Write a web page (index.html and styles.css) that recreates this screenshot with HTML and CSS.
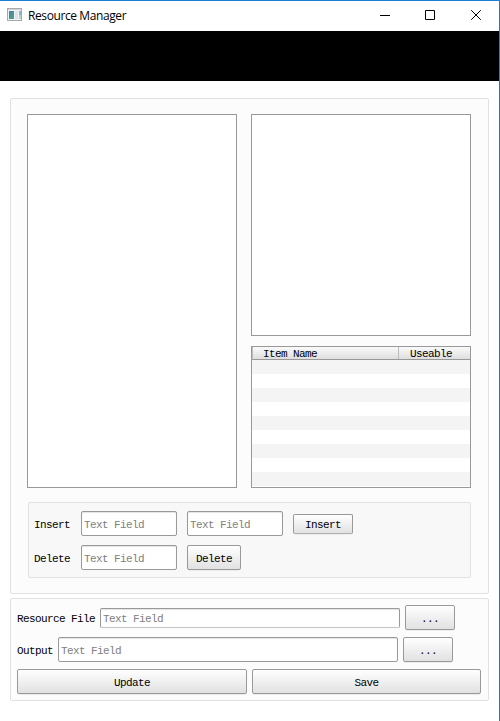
FILE: index.html
```html
<!DOCTYPE html>
<html lang="en">
<head>
<meta charset="utf-8">
<title>Resource Manager</title>
<link rel="stylesheet" href="styles.css">
</head>
<body>
<div class="window">
  <header class="titlebar">
    <svg class="app-icon" width="15" height="13" viewBox="0 0 15 13" shape-rendering="crispEdges">
      <defs>
        <linearGradient id="pane" x1="0" y1="0" x2="1" y2="1">
          <stop offset="0" stop-color="#4a7fae"/><stop offset="1" stop-color="#4fa67c"/>
        </linearGradient>
      </defs>
      <rect x=".5" y=".5" width="14" height="12" fill="#f0f1f3" stroke="#a4a9ae"/>
      <rect x="1" y="1" width="13" height="1" fill="#d3d7dc"/>
      <rect x="2" y="3" width="5" height="8" fill="url(#pane)"/>
      <rect x="8" y="3" width="3" height="8" fill="#dfe2e6"/>
      <rect x="12" y="3" width="2" height="4" fill="#8fb0cf"/>
      <rect x="12" y="7" width="2" height="4" fill="#b5d5c0"/>
    </svg>
    <h1 class="title">Resource Manager</h1>
    <svg class="controls" width="102" height="11" viewBox="0 0 102 11" fill="none" stroke="#000">
      <path d="M0 5.5h10"/>
      <path d="M45.5.5h9v9h-9z"/>
      <path d="M91.2.2l9.6 9.6M100.8.2l-9.6 9.6"/>
    </svg>
  </header>
  <div class="banner"></div>
  <main class="content">
    <section class="panel browser">
      <div class="lists">
        <div class="box tree"></div>
        <div class="side">
          <div class="box preview"></div>
          <div class="box table">
            <div class="thead"><span class="col-name">Item Name</span><span class="col-use">Useable</span></div>
            <div class="rows"></div>
          </div>
        </div>
      </div>
      <div class="group">
        <div class="row">
          <label class="label">Insert</label>
          <div class="field small">Text Field</div>
          <div class="field small">Text Field</div>
          <button class="btn insert">Insert</button>
        </div>
        <div class="row">
          <label class="label">Delete</label>
          <div class="field small">Text Field</div>
          <button class="btn delete">Delete</button>
        </div>
      </div>
    </section>
    <section class="panel files">
      <div class="file-row">
        <label>Resource File</label>
        <div class="field resource">Text Field</div>
        <button class="btn browse">...</button>
      </div>
      <div class="file-row output-row">
        <label>Output</label>
        <div class="field output">Text Field</div>
        <button class="btn browse">...</button>
      </div>
      <div class="file-row actions">
        <button class="btn update">Update</button>
        <button class="btn save">Save</button>
      </div>
    </section>
  </main>
</div>
</body>
</html>
```
FILE: styles.css
```css
* { box-sizing: border-box; }
body {
  margin: 0;
  background: #fff;
  color: #000;
  font: 11px/12px "Liberation Mono", monospace;
  letter-spacing: -0.6px;
}
.window {
  width: 500px;
  height: 721px;
  border-top: 1px solid #1a7fd4;
  border-right: 1px solid #1a7fd4;
  overflow: hidden;
}
.titlebar {
  height: 30px;
  display: flex;
  align-items: flex-start;
  padding: 7px 17px 0 7px;
}
.title {
  flex: 1;
  margin: 0 0 0 6px;
  font: 12px/16px "Open Sans", "Noto Sans", sans-serif;
  letter-spacing: -0.4px;
}
.controls { margin-top: 2px; }
.banner { height: 50px; background: #000; }
.content {
  display: flex;
  flex-direction: column;
  gap: 4px;
  padding: 17px 10px 0;
}
.panel {
  background: #fcfcfc;
  border: 1px solid #e1e1e1;
  border-radius: 2px;
}
.browser { height: 496px; padding: 15px 16px 0; }
.lists { display: flex; gap: 14px; height: 374px; }
.box { background: #fff; border: 1px solid #999; }
.tree { width: 210px; }
.side { display: flex; flex-direction: column; gap: 10px; width: 220px; }
.preview { height: 222px; }
.table { height: 142px; }
.thead {
  display: flex;
  height: 13px;
  border-bottom: 1px solid #999;
  border-left: 1px solid #bbb;
  background: linear-gradient(#fafafa, #dedede);
  line-height: 14px;
}
.col-name { width: 146px; height: 12px; padding-left: 10px; border-right: 1px solid #bbb; }
.col-use { padding-left: 11px; }
.rows {
  height: 126px;
  background: repeating-linear-gradient(#f4f4f4 0 14px, #fff 14px 28px);
}
.group {
  display: flex;
  flex-direction: column;
  gap: 9px;
  width: 443px;
  height: 76px;
  margin: 14px 0 0 1px;
  padding: 8px 5px 0;
  background: #f8f8f8;
  border: 1px solid #e1e1e1;
  border-radius: 2px;
}
.row { display: flex; align-items: center; gap: 10px; height: 25px; }
.label { width: 37px; }
.field {
  height: 25px;
  display: flex;
  align-items: center;
  padding: 3px 2px 0;
  background: #fff;
  border: 1px solid #999;
  border-radius: 2px;
  box-shadow: inset 0 1px 1px #e4e4e4;
  color: #808080;
}
.label, .file-row label { padding-top: 3px; }
.small { width: 96px; }
.btn {
  height: 25px;
  padding: 3px 0 0;
  border: 1px solid #999;
  border-radius: 2px;
  background: linear-gradient(#fff, #e1e1e1);
  box-shadow: 0 1px 0 #ececec;
  color: #000;
  font: inherit;
  letter-spacing: inherit;
  text-align: center;
}
.insert { width: 60px; height: 20px; border-bottom-color: #b0b0b0; }
.delete { width: 54px; }
.files { height: 103px; padding: 6px 6px 0; }
.file-row { display: flex; align-items: center; gap: 5px; height: 25px; }
.file-row label { flex: none; }
.output-row { margin-top: 7px; }
.actions { margin-top: 7px; }
.resource { width: 300px; height: 20px; border-bottom-color: #c4c4c4; }
.output { width: 340px; }
.browse { width: 50px; }
.update { width: 230px; }
.save { width: 229px; }
```
